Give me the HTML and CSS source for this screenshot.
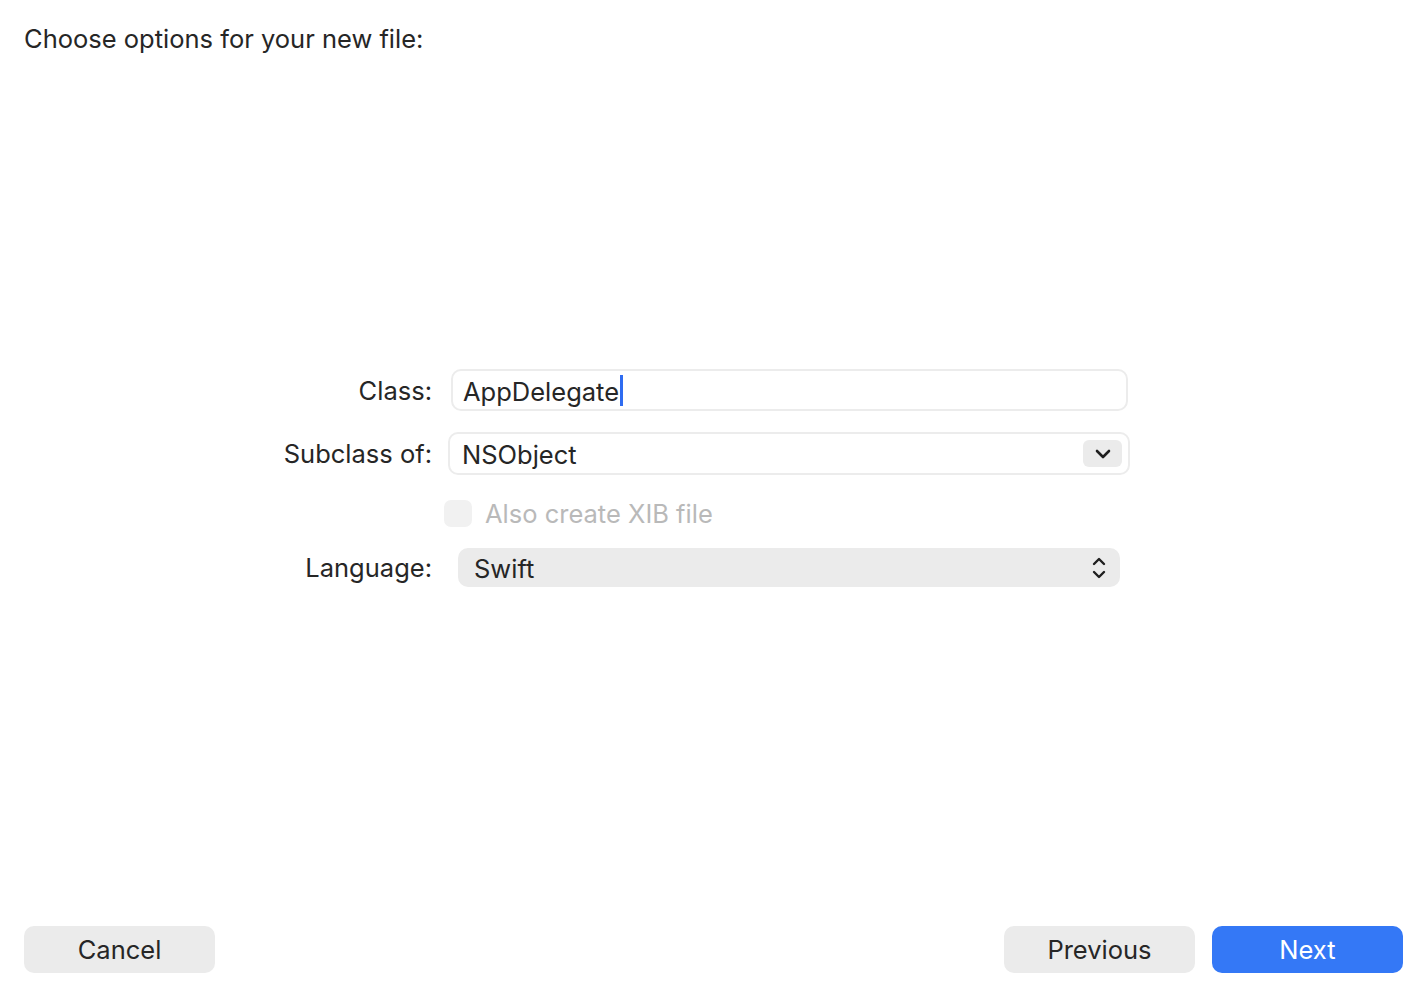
FILE: index.html
```html
<!DOCTYPE html>
<html>
<head>
<meta charset="utf-8">
<link rel="stylesheet" href="styles.css">
</head>
<body>
<div class="page">
  <h1 class="title">Choose options for your new file:</h1>
  <div class="form">
    <div class="row row-class">
      <label class="lbl">Class:</label>
      <div class="field text-field"><span class="val">AppDelegate</span><span class="caret"></span></div>
    </div>
    <div class="row row-sub">
      <label class="lbl">Subclass of:</label>
      <div class="field combo"><span class="val">NSObject</span>
        <span class="combo-btn"><svg width="16" height="10" viewBox="0 0 16 10"><path d="M2 2 L8 8 L14 2" fill="none" stroke="#1f1f1f" stroke-width="2.6" stroke-linecap="round" stroke-linejoin="round"/></svg></span>
      </div>
    </div>
    <div class="row row-check">
      <span class="lbl"></span>
      <div class="check-wrap"><span class="checkbox"></span><span class="check-text">Also create XIB file</span></div>
    </div>
    <div class="row row-lang">
      <label class="lbl">Language:</label>
      <div class="field popup"><span class="val">Swift</span>
        <svg class="updown" width="16" height="26" viewBox="0 0 16 26"><path d="M3 9 L8 4 L13 9 M3 17 L8 22 L13 17" fill="none" stroke="#1f1f1f" stroke-width="2.4" stroke-linecap="round" stroke-linejoin="round"/></svg>
      </div>
    </div>
  </div>
  <div class="footer">
    <button class="btn">Cancel</button>
    <div class="right">
      <button class="btn">Previous</button>
      <button class="btn primary">Next</button>
    </div>
  </div>
</div>
</body>
</html>
```
FILE: styles.css
```css
* { box-sizing: border-box; }
html, body { margin: 0; padding: 0; background: #ffffff; }
body {
  font-family: Inter, "Noto Sans", "Liberation Sans", sans-serif;
  color: #262626;
  font-size: 26px;
}
.page {
  width: 1420px;
  height: 994px;
  display: flex;
  flex-direction: column;
  padding: 0 17px 21px 24px;
}
.title {
  margin: 23px 0 0 0;
  font-size: 25.5px;
  font-weight: 400;
  line-height: 32px;
  color: #262626;
}
.form {
  margin-top: 314px;
  display: flex;
  flex-direction: column;
}
.row {
  display: flex;
  align-items: center;
}
.lbl {
  width: 408px;
  text-align: right;
  font-size: 25.5px;
  color: #262626;
  flex: none;
}
.row-class { height: 42px; }
.row-sub { height: 43px; margin-top: 21px; }
.row-check { height: 27px; margin-top: 25px; }
.row-lang { height: 39px; margin-top: 21px; }
.field {
  display: flex;
  align-items: center;
  height: 100%;
  font-size: 25.5px;
  color: #262626;
}
.val { position: relative; top: 1px; }
.text-field {
  margin-left: 19px;
  width: 677px;
  border: 2px solid #ececec;
  border-radius: 10px;
  padding-left: 10px;
}
.caret {
  display: inline-block;
  width: 3px;
  height: 31px;
  background: #2f6cf1;
  margin-left: 1px;
}
.combo {
  margin-left: 16px;
  width: 682px;
  border: 2px solid #ececec;
  border-radius: 10px;
  padding-left: 12px;
  padding-right: 6px;
  justify-content: space-between;
}
.combo-btn {
  width: 39px;
  height: 27px;
  background: #ebebeb;
  border-radius: 6px;
  display: flex;
  align-items: center;
  justify-content: center;
}
.check-wrap {
  margin-left: 12px;
  display: flex;
  align-items: center;
  height: 100%;
}
.checkbox {
  width: 28px;
  height: 27px;
  background: #f1f1f1;
  border-radius: 7px;
}
.check-text {
  margin-left: 13px;
  color: #b9b9b9;
  font-size: 25.5px;
}
.popup {
  margin-left: 26px;
  width: 662px;
  background: #ebebeb;
  border-radius: 10px;
  padding-left: 16px;
  padding-right: 13px;
  justify-content: space-between;
}
.footer {
  margin-top: auto;
  display: flex;
  justify-content: space-between;
  align-items: center;
}
.right { display: flex; gap: 17px; }
.btn {
  width: 191px;
  height: 47px;
  border: none;
  border-radius: 10px;
  background: #ebebeb;
  font-family: inherit;
  font-size: 25.5px;
  color: #262626;
  padding: 0;
}
.primary { background: #3478f6; color: #ffffff; }
```
